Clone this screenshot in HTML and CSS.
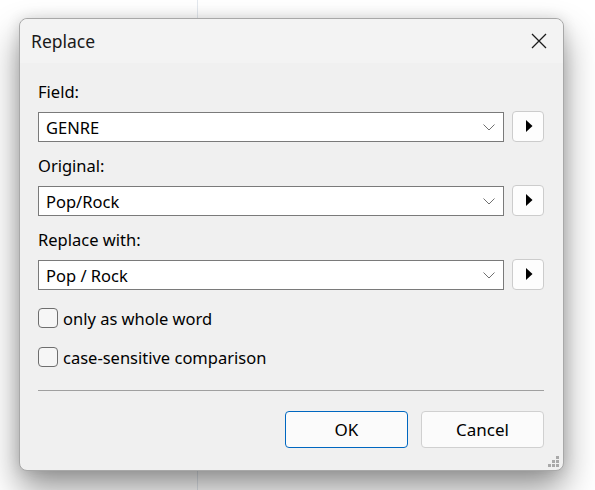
FILE: index.html
```html
<!DOCTYPE html>
<html>
<head>
<meta charset="utf-8">
<link rel="stylesheet" href="styles.css">
</head>
<body>
<div class="desk-line"></div>
<div class="dialog">
  <div class="titlebar">
    <span class="title">Replace</span>
    <svg class="close" width="16" height="16" viewBox="0 0 16 16"><path d="M1 1 L15 15 M15 1 L1 15" stroke="#1b1b1b" stroke-width="1.3" fill="none"/></svg>
  </div>
  <div class="body">
    <label class="lbl">Field:</label>
    <div class="row">
      <div class="combo"><span>GENRE</span><svg class="chev" width="12" height="7" viewBox="0 0 12 7"><path d="M0.5 0.5 L6 6 L11.5 0.5" stroke="#707070" stroke-width="1" fill="none"/></svg></div>
      <div class="arrowbtn"><svg width="7" height="12" viewBox="0 0 7 12"><path d="M0 0 L6.5 6 L0 12 Z" fill="#000"/></svg></div>
    </div>
    <label class="lbl">Original:</label>
    <div class="row">
      <div class="combo"><span>Pop/Rock</span><svg class="chev" width="12" height="7" viewBox="0 0 12 7"><path d="M0.5 0.5 L6 6 L11.5 0.5" stroke="#707070" stroke-width="1" fill="none"/></svg></div>
      <div class="arrowbtn"><svg width="7" height="12" viewBox="0 0 7 12"><path d="M0 0 L6.5 6 L0 12 Z" fill="#000"/></svg></div>
    </div>
    <label class="lbl">Replace with:</label>
    <div class="row">
      <div class="combo"><span>Pop / Rock</span><svg class="chev" width="12" height="7" viewBox="0 0 12 7"><path d="M0.5 0.5 L6 6 L11.5 0.5" stroke="#707070" stroke-width="1" fill="none"/></svg></div>
      <div class="arrowbtn"><svg width="7" height="12" viewBox="0 0 7 12"><path d="M0 0 L6.5 6 L0 12 Z" fill="#000"/></svg></div>
    </div>
    <div class="check first"><span class="box"></span><span>only as whole word</span></div>
    <div class="check"><span class="box"></span><span>case-sensitive comparison</span></div>
    <div class="sep"></div>
    <div class="buttons">
      <div class="btn ok">OK</div>
      <div class="btn">Cancel</div>
    </div>
  </div>
  <svg class="grip" width="12" height="12" viewBox="0 0 12 12">
    <rect x="8" y="0" width="3" height="3" fill="#a9a9a9"/>
    <rect x="4" y="4" width="3" height="3" fill="#a9a9a9"/>
    <rect x="8" y="4" width="3" height="3" fill="#a9a9a9"/>
    <rect x="0" y="8" width="3" height="3" fill="#a9a9a9"/>
    <rect x="4" y="8" width="3" height="3" fill="#a9a9a9"/>
    <rect x="8" y="8" width="3" height="3" fill="#a9a9a9"/>
  </svg>
</div>
</body>
</html>
```
FILE: styles.css
```css
html, body {
  margin: 0;
  padding: 0;
  background: #ffffff;
  width: 595px;
  height: 490px;
  overflow: hidden;
}
body {
  position: relative;
  font-family: "Segoe UI", "Noto Sans", "Open Sans", sans-serif;
  font-size: 16.5px;
  color: #000;
  padding: 18px 0 0 19px;
  box-sizing: border-box;
}
.desk-line {
  position: absolute;
  left: 197px;
  top: 0;
  width: 1px;
  height: 490px;
  background: #e3e8ee;
}
.dialog {
  position: relative;
  width: 545px;
  height: 453px;
  box-sizing: border-box;
  border: 1px solid #a8a8a8;
  border-radius: 8px;
  background: #f0f0f0;
  box-shadow: 0 18px 34px rgba(0,0,0,0.42), 0 0 14px rgba(0,0,0,0.12);
  display: flex;
  flex-direction: column;
}
.titlebar {
  height: 44px;
  background: #f3f3f3;
  border-radius: 8px 8px 0 0;
  display: flex;
  align-items: center;
  justify-content: space-between;
  padding: 0 16px 0 11px;
  flex: none;
}
.title {
  font-size: 17.5px;
  color: #1a1a1a;
}
.close {
  display: block;
}
.body {
  flex: 1;
  padding: 18px 19px 0 18px;
  display: flex;
  flex-direction: column;
}
.lbl {
  display: block;
  height: 22px;
  line-height: 22px;
  margin-bottom: 9px;
}
.row {
  display: flex;
  align-items: center;
  gap: 8px;
  margin-bottom: 13px;
}
.combo {
  flex: 1;
  height: 30px;
  box-sizing: border-box;
  border: 1px solid #7a7a7a;
  background: #fff;
  display: flex;
  align-items: center;
  justify-content: space-between;
  padding: 0 8px 0 7px;
}
.chev {
  display: block;
  margin-top: 1px;
}
.arrowbtn {
  width: 32px;
  height: 31px;
  box-sizing: border-box;
  border: 1px solid #cccccc;
  border-radius: 4px;
  background: #fdfdfd;
  display: flex;
  align-items: center;
  justify-content: center;
  margin-top: -2px;
}
.arrowbtn svg {
  display: block;
  margin-left: 2px;
}
.check {
  display: flex;
  align-items: center;
  gap: 5px;
  height: 20px;
  margin-bottom: 19px;
}
.check.first {
  margin-top: 5px;
}
.box {
  width: 20px;
  height: 20px;
  box-sizing: border-box;
  border: 1px solid #6e6e6e;
  border-radius: 4px;
  background: #f6f6f6;
  flex: none;
}
.sep {
  height: 1px;
  background: #a0a0a0;
  margin-top: 4px;
}
.buttons {
  display: flex;
  justify-content: flex-end;
  gap: 13px;
  margin-top: 20px;
}
.btn {
  width: 123px;
  height: 37px;
  box-sizing: border-box;
  border: 1px solid #d0d0d0;
  border-radius: 4px;
  background: #fbfbfb;
  display: flex;
  align-items: center;
  justify-content: center;
  font-size: 17px;
}
.btn.ok {
  border-color: #0067c0;
}
.grip {
  position: absolute;
  right: 3px;
  bottom: 2px;
}
```
